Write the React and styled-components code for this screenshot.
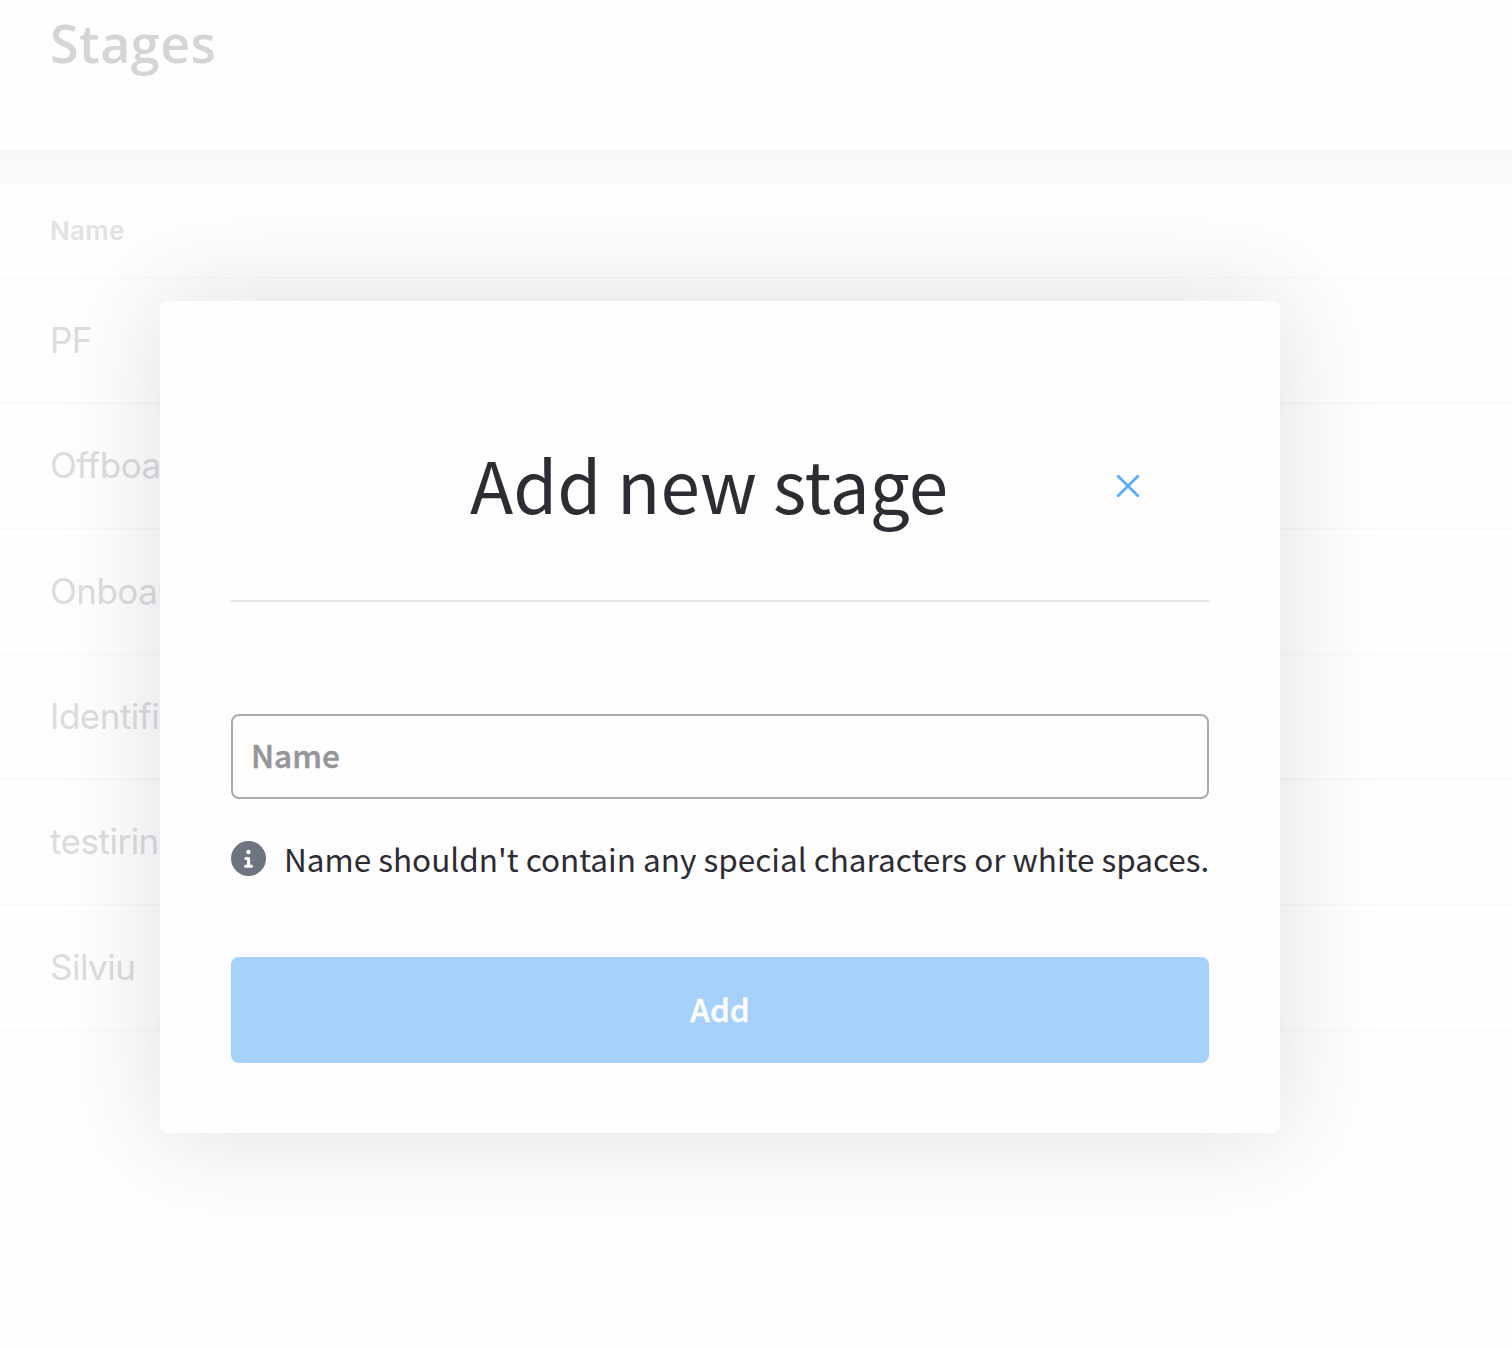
import React, { useState } from 'react';
import styled, { createGlobalStyle } from 'styled-components';

const GlobalStyle = createGlobalStyle`
  *, *::before, *::after { box-sizing: border-box; }
  html, body { margin: 0; padding: 0; background: #fefefe; overflow: hidden; }
  body { font-family: Inter, 'Liberation Sans', sans-serif; }
`;

const modalFont = `'Noto Sans CJK SC', 'Noto Sans CJK JP', sans-serif`;

const Page = styled.div`
  position: relative;
  width: 1512px;
  height: 1348px;
  overflow: hidden;
  background: #fefefe;
`;

const PageHeader = styled.header`
  height: 149px;
  padding: 3px 50px 0;
`;

const PageTitle = styled.h1`
  margin: 0;
  font: 600 52px/80px 'Open Sans', sans-serif;
  letter-spacing: 0.5px;
  color: #d5d5d5;
`;

const Band = styled.div`
  height: 35px;
  background: linear-gradient(#f8f8f8, #fbfbfb);
`;

const HeadCell = styled.div`
  display: flex;
  align-items: center;
  height: 95px;
  padding: 0 50px;
  border-bottom: 2px solid #fafafa;
  color: #e2e2e2;
  font-size: 26px;
  font-weight: 600;
  letter-spacing: 0.3px;
`;

const Row = styled.div`
  display: flex;
  align-items: center;
  height: 125.33px;
  padding: 0 50px 1px;
  border-bottom: 2px solid #fafafa;
  color: #dcdcdc;
  font-size: 35px;
  font-weight: 400;
  letter-spacing: -0.5px;
`;

const Overlay = styled.div`
  position: absolute;
  inset: 0;
  padding: 301px 0 0 160px;
`;

const Modal = styled.section`
  width: 1120px;
  height: 832px;
  padding: 0 71px;
  border-radius: 8px;
  background: #fefefe;
  box-shadow: 0 0 100px rgba(32, 46, 70, 0.15);
  font-family: ${modalFont};
  color: #2c2c32;
`;

const ModalHeader = styled.div`
  display: flex;
  align-items: center;
  justify-content: space-between;
  height: 301px;
  padding: 71px 69px 0 239px;
  border-bottom: 2px solid #e5e5ea;
`;

const ModalTitle = styled.h2`
  margin: 0;
  padding-bottom: 6px;
  font-size: 71px;
  font-weight: 400;
  line-height: 100px;
  white-space: nowrap;
`;

const CloseButton = styled.button`
  display: flex;
  padding: 0;
  border: 0;
  background: none;
`;

const NameInput = styled.input`
  display: block;
  width: 100%;
  height: 85px;
  margin-top: 112px;
  padding: 0 18px 5px;
  border: 2px solid #aaaaab;
  border-radius: 8px;
  background: transparent;
  font: 500 31.5px ${modalFont};
  color: #2c2c32;
  outline: none;
  &::placeholder {
    color: #95959a;
    opacity: 1;
    -webkit-text-stroke: 0.5px #95959a;
  }
`;

const Hint = styled.div`
  display: flex;
  align-items: center;
  gap: 18px;
  height: 48px;
  margin-top: 35px;
  font-size: 31.5px;
  line-height: 48px;
  white-space: nowrap;
`;

const InfoIcon = styled.svg`
  flex: none;
  width: 35px;
  height: 35px;
`;

const AddButton = styled.button`
  display: block;
  width: 100%;
  height: 106px;
  margin-top: 75px;
  padding: 0 0 4px;
  border: 0;
  border-radius: 8px;
  background: #a5d1fb;
  color: #fefefe;
  font: 500 31.5px ${modalFont};
  -webkit-text-stroke: 0.5px #fefefe;
`;

const stages = ['PF', 'Offboarding', 'Onboarding', 'Identification', 'testiring', 'Silviu'];

export default function App() {
  const [name, setName] = useState('');
  return (
    <Page>
      <GlobalStyle />
      <PageHeader>
        <PageTitle>Stages</PageTitle>
      </PageHeader>
      <Band />
      <HeadCell>Name</HeadCell>
      {stages.map((s) => <Row key={s}>{s}</Row>)}
      <Overlay>
        <Modal>
          <ModalHeader>
            <ModalTitle>Add new stage</ModalTitle>
            <CloseButton aria-label="Close">
              <svg width="24" height="24" viewBox="0 0 24 24" fill="none" stroke="#57adfb" strokeWidth="2.7" strokeLinecap="round">
                <path d="M2.2 2.2L21.8 21.8M21.8 2.2L2.2 21.8" />
              </svg>
            </CloseButton>
          </ModalHeader>
          <NameInput placeholder="Name" value={name} onChange={(e) => setName(e.target.value)} />
          <Hint>
            <InfoIcon viewBox="0 0 35 35">
              <circle cx="17.5" cy="17.5" r="17.5" fill="#6e7380" />
              <circle cx="17.4" cy="11" r="2.2" fill="#fefefe" />
              <path d="M15 17.5H17.6V25M14.6 25.2H20.6" fill="none" stroke="#fefefe" strokeWidth="3.1" strokeLinecap="round" strokeLinejoin="round" />
            </InfoIcon>
            <span>Name shouldn't contain any special characters or white spaces.</span>
          </Hint>
          <AddButton>Add</AddButton>
        </Modal>
      </Overlay>
    </Page>
  );
}
